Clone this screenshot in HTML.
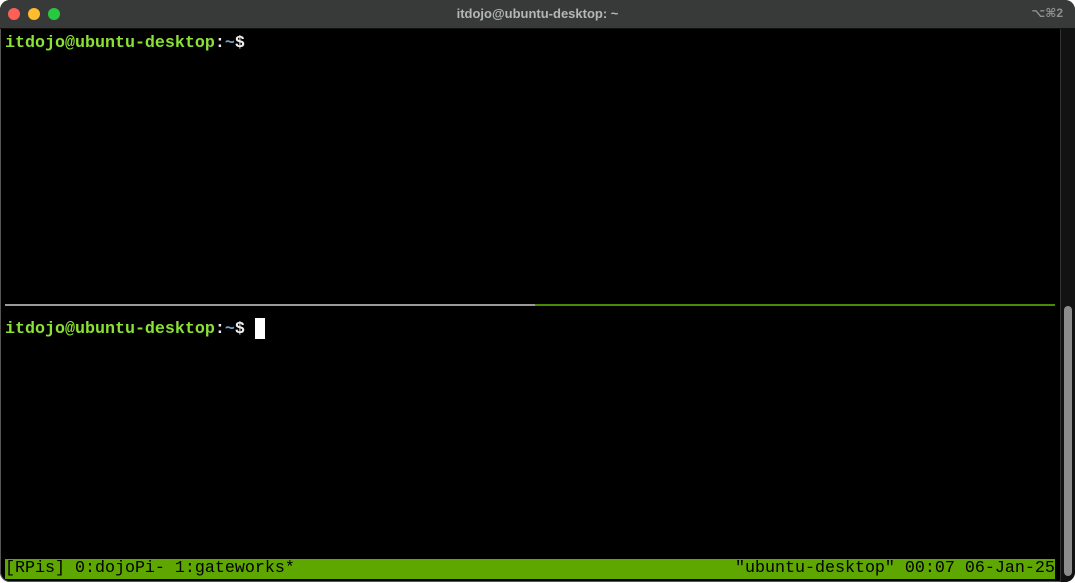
<!DOCTYPE html>
<html><head><meta charset="utf-8"><style>
html,body{margin:0;padding:0;background:#fff;width:1075px;height:583px;overflow:hidden}
.win{position:absolute;left:0;top:0;width:1075px;height:582px;background:#000;border-radius:10px;overflow:hidden;box-shadow:0 0 0 1px #555 inset}
.title{position:absolute;left:0;top:0;width:1075px;height:28px;background:#373a39;border-bottom:1px solid #111}
.dot{position:absolute;top:8px;width:12px;height:12px;border-radius:50%}
.ttext{position:absolute;left:0;width:1075px;top:6px;text-align:center;font:bold 13px "Liberation Sans",sans-serif;color:#b4b7b5}
.kbd{position:absolute;right:12px;top:6px;font:bold 12px "Liberation Sans","DejaVu Sans",sans-serif;color:#8d908e}
.mono{font-family:"Liberation Mono","DejaVu Sans Mono",monospace;font-size:16.67px;white-space:pre;position:absolute;line-height:20px}
.p{font-weight:bold;color:#8ae234}
.t{font-weight:bold;color:#729fcf}
.d{font-weight:bold;color:#eee}
.sb{position:absolute;left:1060px;top:29px;width:15px;height:553px;background:#121212;border-left:1px solid #333}
.thumb{position:absolute;left:1064px;top:306px;width:8px;height:270px;background:#8c8c8c;border-radius:4px}
.status{position:absolute;left:5px;top:559px;width:1050px;height:20px;background:#5ea600}
</style></head><body>
<div class="win">
 <div class="title">
  <div class="dot" style="left:8px;background:#fe5f57"></div>
  <div class="dot" style="left:28px;background:#febc2e"></div>
  <div class="dot" style="left:48px;background:#28c840"></div>
  <div class="ttext">itdojo@ubuntu-desktop: ~</div>
  <div class="kbd">⌥⌘2</div>
 </div>
 <div class="mono" style="left:5px;top:34px"><span class="p">itdojo@ubuntu-desktop</span><span class="d">:</span><span class="t">~</span><span class="d">$</span></div>
 <div style="position:absolute;left:5px;top:304px;width:530px;height:2px;background:#9a9a9a"></div>
 <div style="position:absolute;left:535px;top:304px;width:520px;height:2px;background:#4a8a00"></div>
 <div class="mono" style="left:5px;top:320px"><span class="p">itdojo@ubuntu-desktop</span><span class="d">:</span><span class="t">~</span><span class="d">$</span></div>
 <div style="position:absolute;left:255px;top:318px;width:10px;height:21px;background:#fff"></div>
 <div class="sb"></div>
 <div class="thumb"></div>
 <div class="status"></div>
 <div class="mono" style="left:5px;top:559px;color:#000">[RPis] 0:dojoPi- 1:gateworks*</div>
 <div class="mono" style="left:735px;top:559px;color:#000">"ubuntu-desktop" 00:07 06-Jan-25</div>
</div>
</body></html>
